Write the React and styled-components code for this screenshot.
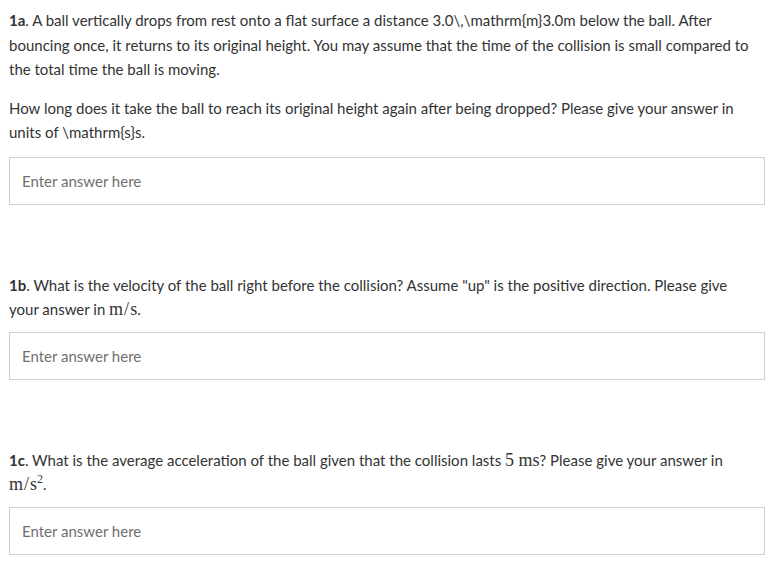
import React from 'react';
import styled, { createGlobalStyle } from 'styled-components';

const GlobalStyle = createGlobalStyle`
  body {
    margin: 0;
    background: #fff;
    font-family: Lato, "Open Sans", sans-serif;
    color: #333;
  }
`;

const Page = styled.div`
  width: 756px;
  padding: 8px 0 0 9px;
  display: flex;
  flex-direction: column;
`;

const Question = styled.section`
  display: flex;
  flex-direction: column;
  margin-bottom: ${(p) => p.$gap || '0'};
`;

const Text = styled.p`
  margin: 0 0 ${(p) => p.$after || '12px'};
  max-width: ${(p) => p.$max || 'none'};
  font-size: 15px;
  line-height: 24.5px;
`;

const Label = styled.b`
  font-weight: 700;
`;

const Math = styled.span`
  font-family: "Liberation Serif", "DejaVu Serif", serif;
  font-size: 18px;
  line-height: 0;
`;

const Slash = styled.span`
  margin: 0 1px;
`;

const Sup = styled.sup`
  font-size: 12px;
  line-height: 0;
  vertical-align: 0.6em;
`;

const Input = styled.input`
  box-sizing: border-box;
  width: 756px;
  height: 48px;
  border: 1px solid #cfcfcf;
  border-radius: 0;
  padding: 0 12px;
  font-family: Lato, "Open Sans", sans-serif;
  font-size: 15px;
  color: #333;
  outline: none;

  &::placeholder {
    color: #6f6f6f;
  }
`;

export default function App() {
  return (
    <>
      <GlobalStyle />
      <Page>
        <Question $gap="68px">
          <Text $after="14px">
            <Label>1a</Label>. A ball vertically drops from rest onto a flat surface a distance
            3.0\,\mathrm{'{'}m{'}'}3.0m below the ball. After bouncing once, it returns to its original
            height. You may assume that the time of the collision is small compared to the total time
            the ball is moving.
          </Text>
          <Text $after="12px">
            How long does it take the ball to reach its original height again after being dropped?
            Please give your answer in units of \mathrm{'{'}s{'}'}s.
          </Text>
          <Input placeholder="Enter answer here" />
        </Question>
        <Question $gap="68px">
          <Text $after="10px" $max="735px">
            <Label>1b</Label>. What is the velocity of the ball right before the collision? Assume
            "up" is the positive direction. Please give your answer in{' '}
            <Math>
              m<Slash>/</Slash>s
            </Math>
            .
          </Text>
          <Input placeholder="Enter answer here" />
        </Question>
        <Question>
          <Text $after="10px" $max="735px">
            <Label>1c</Label>. What is the average acceleration of the ball given that the collision
            lasts <Math>5 ms</Math>? Please give your answer in{' '}
            <Math>
              m<Slash>/</Slash>s<Sup>2</Sup>
            </Math>
            .
          </Text>
          <Input placeholder="Enter answer here" />
        </Question>
      </Page>
    </>
  );
}
